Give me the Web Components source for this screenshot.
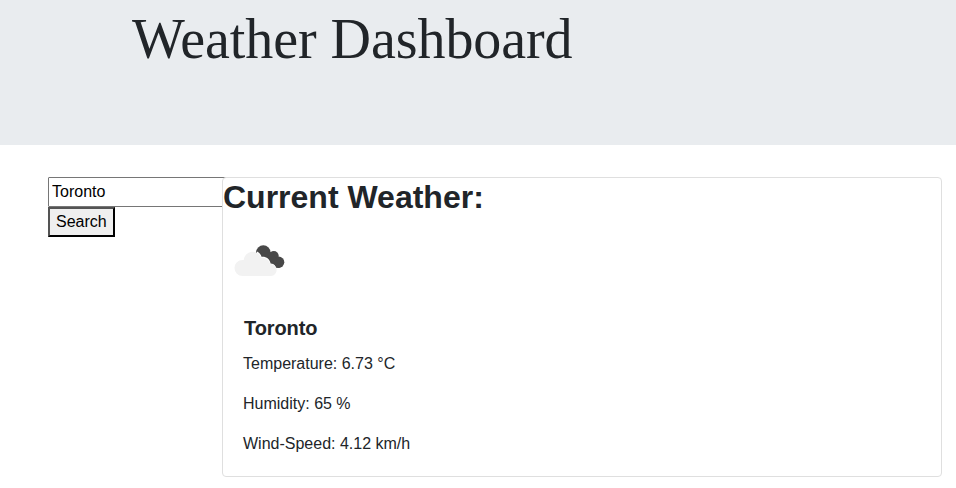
<!DOCTYPE html>
<html lang="en">
<head>
<meta charset="utf-8">
<title>Weather Dashboard</title>
<style>
body{margin:0;background:#fff;color:#212529;font:16px/24px "Liberation Sans",Arial,sans-serif;overflow:hidden}
</style>
</head>
<body>
<weather-app></weather-app>
<script>
const define=(name,html)=>customElements.define(name,class extends HTMLElement{
  constructor(){super();this.attachShadow({mode:"open"}).innerHTML=html;}
});
define("page-banner",`<style>
:host{display:block;box-sizing:border-box;height:145px;background:#e9ecef;padding:6px 0 0 132px}
h1{margin:0;font:400 56px/67px "Liberation Serif","Times New Roman",serif;letter-spacing:-.07px}
</style><h1><slot></slot></h1>`);
define("city-search",`<style>
:host{display:block;width:174px}
input,button{display:block;box-sizing:border-box;font:16px/24px "Liberation Sans",Arial,sans-serif;margin:0;border-radius:0}
input{width:184px;height:30px;padding:1px 3px;border:1px solid #767676;border-radius:1px;background:#fff;color:#000}
button{height:30px;padding:1px 6px;border:2px outset #000;background:#efefef;color:#000}
</style><input value="Toronto" aria-label="City"><button>Search</button>`);
define("cloud-icon",`<style>:host{display:block;width:75px;height:50px}svg{display:block}</style>
<svg width="75" height="50" viewBox="0 0 75 50">
<g fill="#484848"><circle cx="38.300" cy="17.600" r="7.300"/><circle cx="48.800" cy="21" r="4.900"/><circle cx="53.600" cy="27.200" r="5.700"/><path d="M36 18l12-1 7 15.800H45z"/></g>
<path fill="#fff" d="M32 16.500c2 .8 3.800 2.600 4.500 5.300 4.800-.4 8.300 2 9.100 6.800 2.200.1 4 1 5.100 3.400l-7 5H30z"/>
<path fill="#f2f2f2" d="M17.500 41a8 8 0 0 1 0-16h1.200a9 9 0 0 1 17.500-2.200 8.400 8.400 0 0 1 9.100 6.200 6 6 0 0 1 .7 12z"/>
</svg>`);
define("weather-card",`<style>
:host{display:block;box-sizing:border-box;width:720px;height:300px;border:1px solid #dfdfdf;border-radius:4px;background:#fff;position:relative}
h2{margin:0;font-size:32px;line-height:38px}
cloud-icon{margin:19px 0 0 2px}
.body{padding:31px 20px 20px}
h3{margin:0 0 12px 1px;font-size:20px;line-height:24px;letter-spacing:-.1px}
p{margin:0 0 16px}
</style><h2>Current Weather:</h2><cloud-icon></cloud-icon>
<div class="body"><h3>Toronto</h3><p>Temperature: 6.73 °C</p><p>Humidity: 65 %</p><p>Wind-Speed: 4.12 km/h</p></div>`);
define("weather-app",`<style>
:host{display:block}
main{display:flex;padding:32px 0 0 48px}
</style><page-banner>Weather Dashboard</page-banner><main><city-search></city-search><weather-card></weather-card></main>`);
</script>
</body>
</html>
